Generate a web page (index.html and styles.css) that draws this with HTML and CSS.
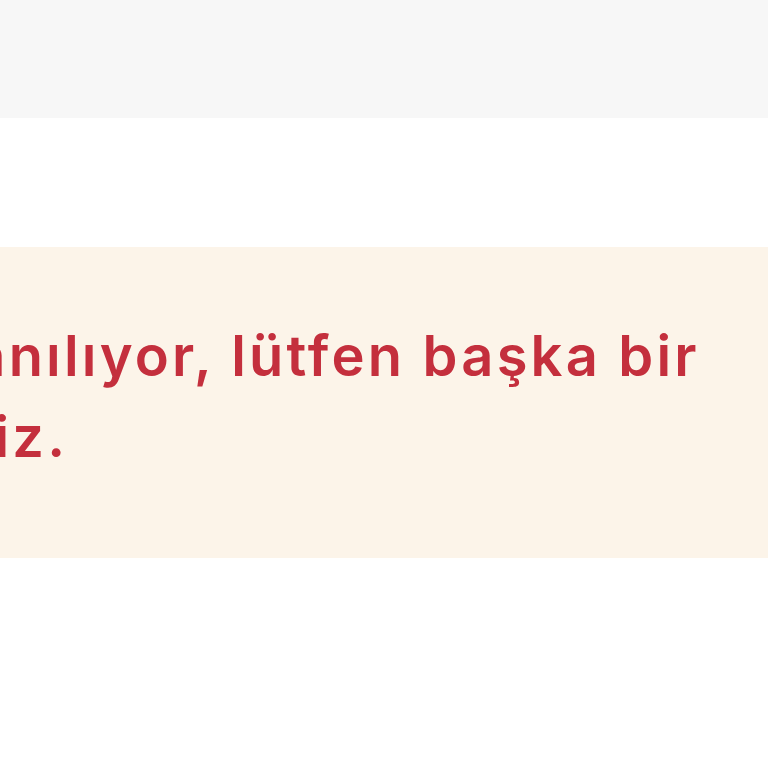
FILE: index.html
```html
<!DOCTYPE html>
<html lang="tr">
<head>
<meta charset="utf-8">
<title>Hata</title>
<link rel="stylesheet" href="styles.css">
</head>
<body>
<header class="topbar"></header>
<main class="content">
  <div class="alert" role="alert">
    <p class="alert-text">kullanılıyor, lütfen başka bir<br>giriniz.</p>
  </div>
</main>
</body>
</html>
```
FILE: styles.css
```css
html, body {
  margin: 0;
  padding: 0;
  background: #ffffff;
  overflow: hidden;
}
body {
  width: 768px;
  height: 768px;
  font-family: Inter, "Noto Sans", sans-serif;
}
.topbar {
  height: 118px;
  background: #f7f7f7;
}
.content {
  padding-top: 129px;
}
.alert {
  background: #fcf4e9;
  height: 311px;
  overflow: hidden;
  box-sizing: border-box;
  padding-top: 69px;
}
.alert-text {
  margin: 0 0 0 -143px;
  text-indent: 8px;
  color: #c42f3d;
  font-size: 56px;
  font-weight: 600;
  line-height: 81px;
  white-space: nowrap;
  letter-spacing: 3.2px;
}
```
